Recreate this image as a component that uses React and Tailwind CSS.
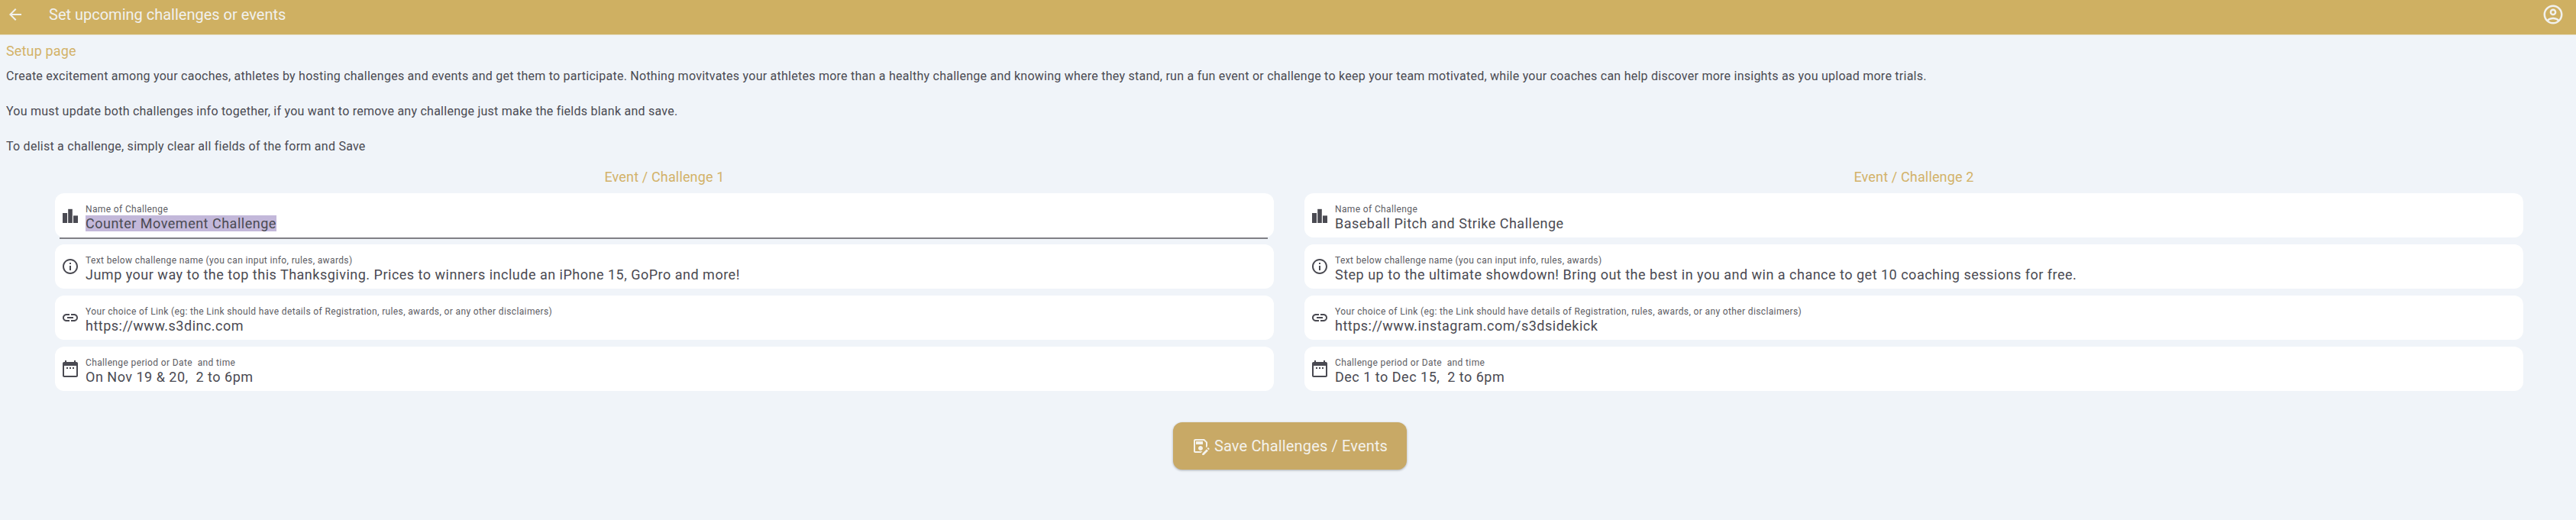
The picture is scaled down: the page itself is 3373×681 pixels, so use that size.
import React from "react";

const P = ({ d, className = "", children }) => (
  <svg viewBox="0 0 24 24" className={className} fill="currentColor" aria-hidden="true">
    {d && <path d={d} />}
    {children}
  </svg>
);

const BarIcon = () => (
  <P className="w-6 h-6 shrink-0">
    <rect x="2" y="9" width="6" height="13" />
    <rect x="9.2" y="3.8" width="5.6" height="18.2" />
    <rect x="16" y="12.4" width="6" height="9.6" />
  </P>
);
const InfoIcon = () => (
  <P className="w-6 h-6 shrink-0" d="M11 7h2v2h-2zm0 4h2v6h-2zm1-9C6.48 2 2 6.48 2 12s4.48 10 10 10 10-4.48 10-10S17.52 2 12 2zm0 18c-4.41 0-8-3.59-8-8s3.59-8 8-8 8 3.59 8 8-3.59 8-8 8z" />
);
const LinkIcon = () => (
  <P className="w-6 h-6 shrink-0" d="M3.9 12c0-1.71 1.39-3.1 3.1-3.1h4V7H7c-2.76 0-5 2.24-5 5s2.24 5 5 5h4v-1.9H7c-1.71 0-3.1-1.39-3.1-3.1zM8 13h8v-2H8v2zm9-6h-4v1.9h4c1.71 0 3.1 1.39 3.1 3.1s-1.39 3.1-3.1 3.1h-4V17h4c2.76 0 5-2.24 5-5s-2.24-5-5-5z" />
);
const CalIcon = () => (
  <P className="w-6 h-6 shrink-0" d="M20 3h-1V1h-2v2H7V1H5v2H4c-1.1 0-2 .9-2 2v16c0 1.1.9 2 2 2h16c1.1 0 2-.9 2-2V5c0-1.1-.9-2-2-2zm0 18H4V8h16v13zM7 10h2v2H7zm4 0h2v2h-2zm4 0h2v2h-2z" />
);

const Field = ({ Icon, label, value, selected, active }) => (
  <div className="relative h-[58px] bg-white rounded-[12px] pl-2 flex items-center gap-2 text-[#4a4a52]">
    <Icon />
    <div className="flex flex-col min-w-0 pt-[6px]">
      <div className="text-[12px] leading-[15px] tracking-[0.37px] text-[#5c5c63] whitespace-pre">{label}</div>
      <div className="text-[18px] leading-[21px] tracking-[0.5px] whitespace-pre">
        <span className={selected ? "bg-[#c3b8da] inline-block" : ""}>{value}</span>
      </div>
    </div>
    {active && <div className="absolute left-[6px] right-[8px] bottom-[-2px] h-[2px] bg-[#808086]" />}
  </div>
);

const Column = ({ title, fields, first }) => (
  <div className="flex flex-col">
    <div className="text-center text-[18px] leading-[24px] tracking-[0.15px] text-[#d3b268] mb-[9px]">{title}</div>
    <div className="flex flex-col gap-[9px]">
      <Field Icon={BarIcon} label="Name of Challenge" value={fields[0]} selected={first} active={first} />
      <Field Icon={InfoIcon} label="Text below challenge name (you can input info, rules, awards)" value={fields[1]} />
      <Field Icon={LinkIcon} label="Your choice of Link (eg: the Link should have details of Registration, rules, awards, or any other disclaimers)" value={fields[2]} />
      <Field Icon={CalIcon} label="Challenge period or Date  and time" value={fields[3]} />
    </div>
  </div>
);

export default function App() {
  return (
    <div className="min-h-[681px] bg-[#f0f4f9] text-[#4a4a52]" style={{ fontFamily: "Roboto, sans-serif" }}>
      <header className="h-[46px] bg-[#cfb062] border-b border-[#e4dcc0] flex items-center pb-[7px] text-[#f1f1ee]">
        <P className="w-6 h-6 ml-2 shrink-0" d="M20 11H7.83l5.59-5.59L12 4l-8 8 8 8 1.41-1.41L7.83 13H20v-2z" />
        <div className="ml-[32px] text-[20px] flex-1">Set upcoming challenges or events</div>
        <P className="w-[30px] h-[30px] mr-[15px]" d="M12 2C6.48 2 2 6.48 2 12s4.48 10 10 10 10-4.48 10-10S17.52 2 12 2zM7.35 18.5C8.66 17.56 10.26 17 12 17s3.34.56 4.65 1.5c-1.31.94-2.91 1.5-4.65 1.5s-3.34-.56-4.65-1.5zm10.79-1.38C16.45 15.8 14.32 15 12 15s-4.45.8-6.14 2.12C4.7 15.73 4 13.95 4 12c0-4.42 3.58-8 8-8s8 3.58 8 8c0 1.95-.7 3.73-1.86 5.12zM12 6c-1.93 0-3.5 1.57-3.5 3.5S10.07 13 12 13s3.5-1.57 3.5-3.5S13.93 6 12 6zm0 5c-.83 0-1.5-.67-1.5-1.5S11.17 8 12 8s1.5.67 1.5 1.5S12.83 11 12 11z" />
      </header>
      <main className="pt-[9px]">
        <div className="pl-2 text-[18px] leading-[24px] tracking-[0.15px] text-[#d3b268]">Setup page</div>
        <div className="pl-2 text-[16px] leading-[46px] tracking-[0.25px] -mt-[2px]">
          <div>Create excitement among your caoches, athletes by hosting challenges and events and get them to participate. Nothing movitvates your athletes more than a healthy challenge and knowing where they stand, run a fun event or challenge to keep your team motivated, while your coaches can help discover more insights as you upload more trials.</div>
          <div>You must update both challenges info together, if you want to remove any challenge just make the fields blank and save.</div>
          <div>To delist a challenge, simply clear all fields of the form and Save</div>
        </div>
        <div className="grid grid-cols-2 gap-10 pl-[72px] pr-[69px] mt-[5px]">
          <Column
            first
            title="Event / Challenge 1"
            fields={[
              "Counter Movement Challenge",
              "Jump your way to the top this Thanksgiving. Prices to winners include an iPhone 15, GoPro and more!",
              "https://www.s3dinc.com",
              "On Nov 19 & 20,  2 to 6pm",
            ]}
          />
          <Column
            title="Event / Challenge 2"
            fields={[
              "Baseball Pitch and Strike Challenge",
              "Step up to the ultimate showdown! Bring out the best in you and win a chance to get 10 coaching sessions for free.",
              "https://www.instagram.com/s3dsidekick",
              "Dec 1 to Dec 15,  2 to 6pm",
            ]}
          />
        </div>
        <div className="flex justify-center pt-[41px] pl-[4px]">
          <button className="w-[306px] h-[62px] rounded-[12px] bg-[#c8a966] text-[#f4f2ec] text-[20px] tracking-[0.15px] flex items-center justify-center gap-[6px] shadow-[0_1px_3px_rgba(0,0,0,0.3)]">
            <P className="w-6 h-6 shrink-0" d="M21 12.4V7l-4-4H5c-1.11 0-2 .9-2 2v14c0 1.1.89 2 2 2h7.4l2-2H5V5h11.17L19 7.83v6.57l2-2zM15 15c0-1.66-1.34-3-3-3s-3 1.34-3 3 1.34 3 3 3 3-1.34 3-3zM6 6h9v4H6V6zm13.99 10.25L22 18.26 16.24 24h-2V22l5.75-5.75zm3.55-.05-.97.97-2.01-2.01.97-.97c.2-.2.51-.2.71 0l1.3 1.3c.2.2.2.51 0 .71z" />
            Save Challenges / Events
          </button>
        </div>
      </main>
    </div>
  );
}
